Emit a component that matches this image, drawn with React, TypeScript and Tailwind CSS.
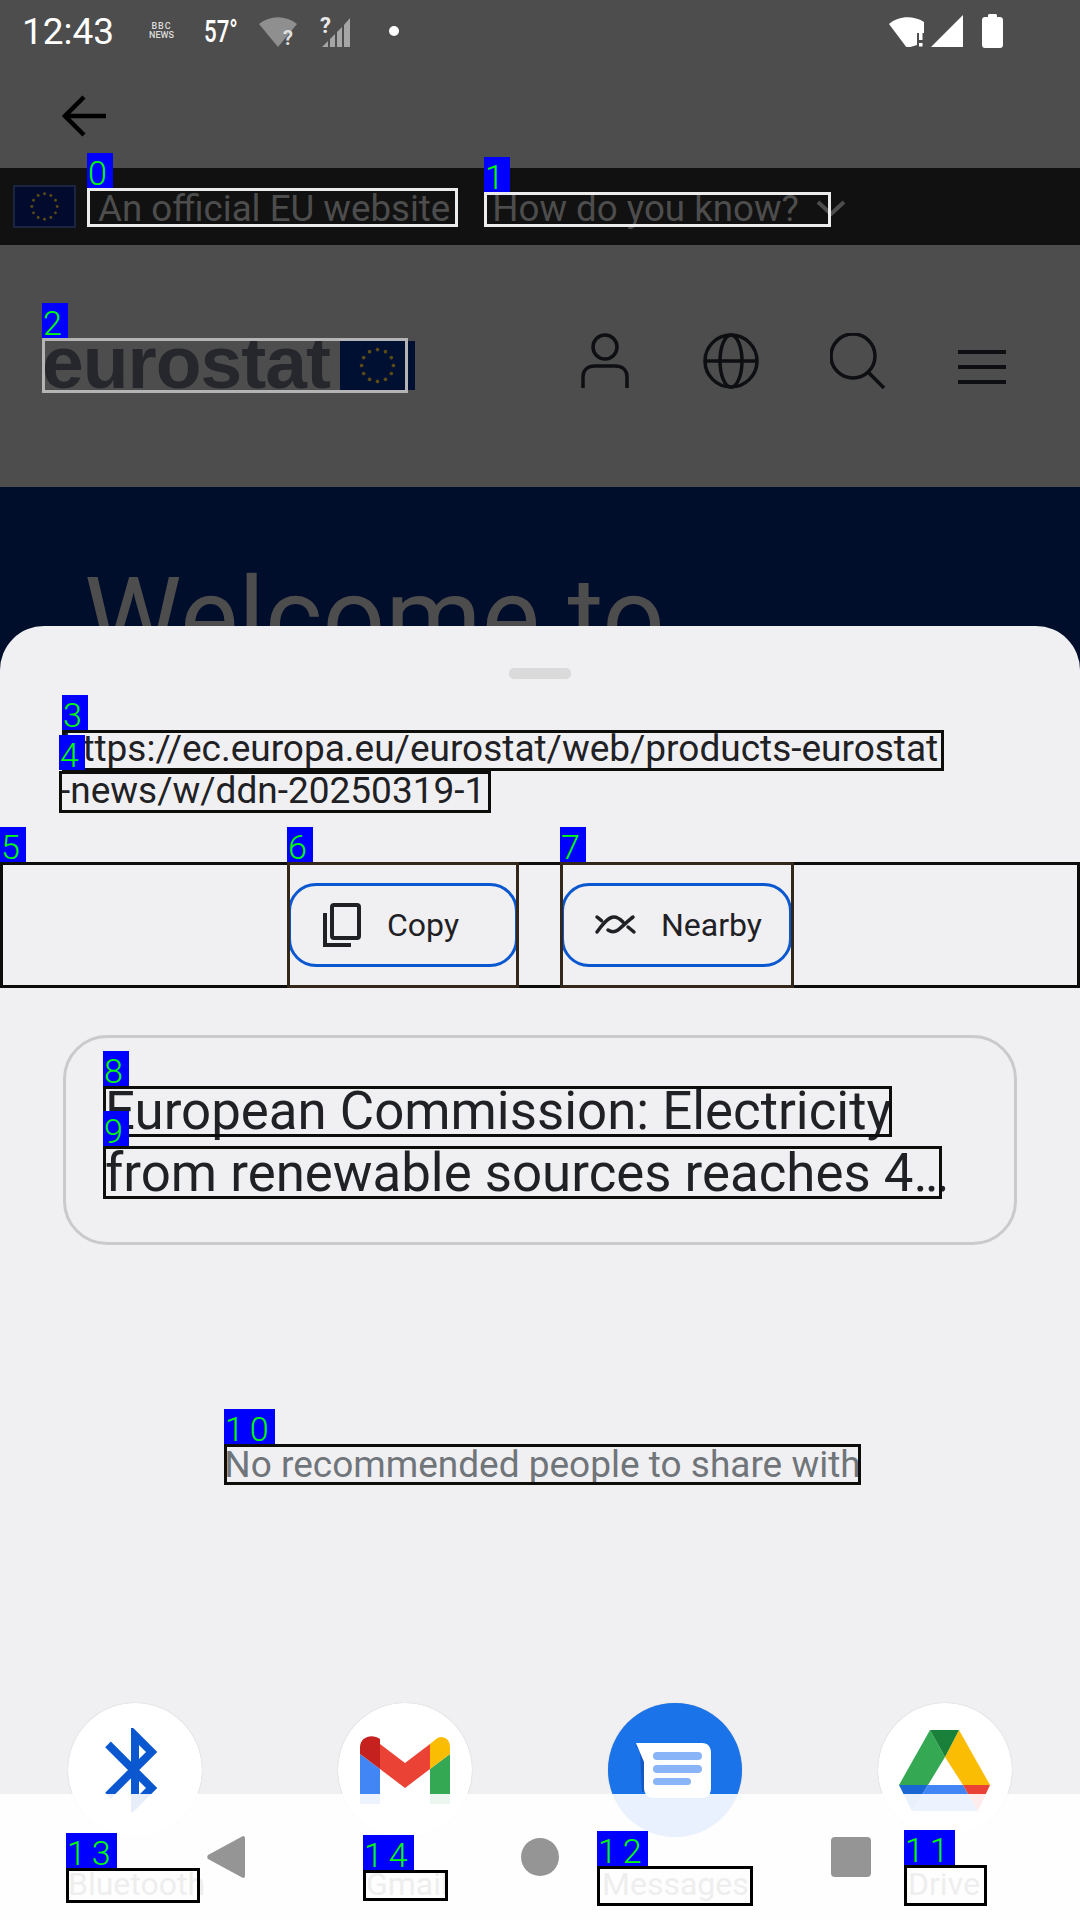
import React from 'react'

const roboto = { fontFamily: 'Roboto, sans-serif' }

const outlines = [
  { box: 'left-[87px] top-[188px] w-[371px] h-[39px] border-[#ececec]' },
  { box: 'left-[484px] top-[192px] w-[347px] h-[35px] border-[#ececec]' },
  { box: 'left-[42px] top-[338px] w-[366px] h-[55px] border-[#b4b4b4]' },
  { box: 'left-[62px] top-[730px] w-[882px] h-[41px] border-[#0d0d0b]' },
  { box: 'left-[59px] top-[771px] w-[432px] h-[42px] border-[#0d0d0b]' },
  { box: 'left-0 top-[862px] w-[1080px] h-[126px] border-[#0d0d0b]' },
  { box: 'left-[287px] top-[862px] w-[232px] h-[126px] border-[#33261a]' },
  { box: 'left-[560px] top-[862px] w-[234px] h-[126px] border-[#33261a]' },
  { box: 'left-[103px] top-[1086px] w-[789px] h-[51px] border-[#0d0d0b]' },
  { box: 'left-[103px] top-[1146px] w-[839px] h-[53px] border-[#0d0d0b]' },
  { box: 'left-[224px] top-[1444px] w-[637px] h-[41px] border-[#0d0d0b]' },
  { box: 'left-[904px] top-[1865px] w-[83px] h-[41px] border-black' },
  { box: 'left-[597px] top-[1866px] w-[156px] h-[40px] border-black' },
  { box: 'left-[66px] top-[1868px] w-[134px] h-[35px] border-black' },
  { box: 'left-[363px] top-[1870px] w-[85px] h-[31px] border-black' },
]

const tags = [
  { n: '0', pos: 'left-[87px] top-[153px] w-[26px]' },
  { n: '1', pos: 'left-[484px] top-[157px] w-[26px]' },
  { n: '2', pos: 'left-[42px] top-[303px] w-[26px]' },
  { n: '3', pos: 'left-[62px] top-[695px] w-[26px]' },
  { n: '4', pos: 'left-[59px] top-[735px] w-[26px]' },
  { n: '5', pos: 'left-0 top-[827px] w-[26px]' },
  { n: '6', pos: 'left-[287px] top-[827px] w-[26px]' },
  { n: '7', pos: 'left-[560px] top-[827px] w-[26px]' },
  { n: '8', pos: 'left-[103px] top-[1051px] w-[26px]' },
  { n: '9', pos: 'left-[103px] top-[1111px] w-[26px]' },
  { n: '10', pos: 'left-[224px] top-[1409px] w-[51px]' },
  { n: '11', pos: 'left-[904px] top-[1830px] w-[51px]' },
  { n: '12', pos: 'left-[597px] top-[1831px] w-[51px]' },
  { n: '13', pos: 'left-[66px] top-[1833px] w-[51px]' },
  { n: '14', pos: 'left-[363px] top-[1835px] w-[51px]' },
]

function EuFlag({ className }: { className: string }) {
  const stars = Array.from({ length: 12 }, (_, i) => {
    const a = (i * Math.PI) / 6
    return { x: 30 + 13 * Math.sin(a), y: 20 - 13 * Math.cos(a), key: i }
  })
  return (
    <svg viewBox="0 0 60 40" className={className}>
      {stars.map((s) => (
        <circle key={s.key} cx={s.x} cy={s.y} r="1.5" fill="#5a4a14" />
      ))}
    </svg>
  )
}

function StatusBar() {
  return (
    <div className="h-[62px] flex items-center text-white" style={roboto}>
      <span className="ml-[22px] w-[126px] text-[37px] leading-none">12:43</span>
      <div className="w-[27px] mr-[29px] flex flex-col items-center text-[9px] leading-[9px] font-medium text-[#dddddd]">
        <span className="tracking-[1px]">BBC</span>
        <span>NEWS</span>
      </div>
      <span className="w-[54px] text-[31px] leading-none font-medium scale-x-[0.72] origin-left">57°</span>
      <svg viewBox="0 0 40 32" className="w-[40px] h-[32px]">
        <path d="M1 9C12 0 28 0 39 9L20 32Z" fill="#8f8f8f" />
        <text x="25" y="30" fontSize="20" fontWeight="700" fill="#e0e0e0" fontFamily="Roboto">?</text>
      </svg>
      <svg viewBox="0 0 32 32" className="ml-[22px] w-[32px] h-[32px]">
        <path d="M2 32L8 26V32ZM10 24L15 19V32H10ZM17 17L22 12V32H17ZM24 10L30 3V32H24Z" fill="#a6a6a6" />
        <text x="0" y="18" fontSize="22" fontWeight="700" fill="#e8e8e8" fontFamily="Roboto">?</text>
      </svg>
      <span className="ml-[37px] w-[10px] h-[10px] rounded-full bg-white" />
      <svg viewBox="0 0 40 32" className="ml-[489px] w-[40px] h-[32px]">
        <path d="M1 9C10 1 25 0 36 7V18H29V30L19 33Z" fill="#ffffff" />
        <rect x="31" y="15" width="3.5" height="10" fill="#ffffff" />
        <rect x="31" y="28" width="3.5" height="3.5" fill="#ffffff" />
      </svg>
      <svg viewBox="0 0 32 32" className="ml-[3px] w-[32px] h-[32px]">
        <path d="M0 32L32 0V32Z" fill="#ffffff" />
      </svg>
      <svg viewBox="0 0 21 34" className="ml-[19px] w-[21px] h-[34px]">
        <path d="M6 3V1.500C6 .7 6.700 0 7.500 0H13.500C14.300 0 15 .7 15 1.500V3H18C19.700 3 21 4.300 21 6V31C21 32.700 19.700 34 18 34H3C1.300 34 0 32.700 0 31V6C0 4.300 1.300 3 3 3Z" fill="#ffffff" />
      </svg>
    </div>
  )
}

function SiteBehind() {
  return (
    <div className="flex flex-col" style={roboto}>
      <div className="h-[106px] pt-[33px] pl-[62px]">
        <svg viewBox="0 0 44 42" className="w-[44px] h-[42px]" fill="none" stroke="#000000" strokeWidth="4.500">
          <path d="M44 21H3M22 2L3 21L22 40" />
        </svg>
      </div>
      <div className="h-[77px] bg-[#111111] flex items-center text-[#4d4d4d] text-[36.7px] leading-none whitespace-nowrap">
        <EuFlag className="ml-[13px] w-[63px] h-[43px] bg-[#020b2e] border-2 border-[#1b2440]" />
        <span className="ml-[22px] mt-[5px]">An official EU website</span>
        <span className="ml-[42px] mt-[5px]">How do you know?</span>
        <svg viewBox="0 0 30 16" className="ml-[17px] mt-[2px] w-[30px] h-[16px]" fill="none" stroke="#4d4d4d" strokeWidth="4">
          <path d="M2 2L15 14L28 2" />
        </svg>
      </div>
      <div className="h-[242px] flex items-start text-[#0e0f12]">
        <span className="ml-[42px] mt-[86px] w-[298px] text-[75px] leading-[62px] font-bold tracking-[-1px] text-[#25272c]" style={{ fontFamily: '"Liberation Sans", sans-serif' }}>
          eurostat
        </span>
        <EuFlag className="mt-[96px] w-[75px] h-[49px] bg-[#001033]" />
        <svg viewBox="0 0 48 56" className="ml-[166px] mt-[88px] w-[48px] h-[56px]" fill="none" stroke="currentColor" strokeWidth="3.500">
          <circle cx="24" cy="14" r="12" />
          <path d="M2 55V44C2 37 7 33 14 33H34C41 33 46 37 46 44V55" />
        </svg>
        <svg viewBox="0 0 56 56" className="ml-[74px] mt-[88px] w-[56px] h-[56px]" fill="none" stroke="currentColor" strokeWidth="3.500">
          <circle cx="28" cy="28" r="26" />
          <ellipse cx="28" cy="28" rx="11" ry="26" />
          <path d="M2 28H54" />
        </svg>
        <svg viewBox="0 0 56 56" className="ml-[71px] mt-[88px] w-[56px] h-[56px]" fill="none" stroke="currentColor" strokeWidth="3.500">
          <circle cx="23" cy="23" r="22" />
          <path d="M38 39L54 55" />
        </svg>
        <div className="ml-[72px] mt-[105px] w-[48px] h-[34px] flex flex-col justify-between">
          <span className="h-[4px] bg-[#0e0f12]" />
          <span className="h-[4px] bg-[#0e0f12]" />
          <span className="h-[4px] bg-[#0e0f12]" />
        </div>
      </div>
      <div className="h-[200px] bg-[#000d2b] pl-[84px] pt-[65px] overflow-hidden">
        <h1 className="text-[110px] leading-[132px] text-[#4d4d4d] whitespace-nowrap">Welcome to</h1>
      </div>
    </div>
  )
}

function Chip({ label, children }: { label: string; children: React.ReactNode }) {
  return (
    <div className="h-[84px] border-[3px] border-[#0b57d0] rounded-[28px] flex items-center text-[32px] leading-none text-[#1f2124]">
      {children}
      <span>{label}</span>
    </div>
  )
}

function BluetoothIcon() {
  return (
    <svg viewBox="0 0 54 84" className="mr-[6px] w-[54px] h-[84px]" fill="none" stroke="#0b57d0" strokeWidth="8">
      <path d="M3 16.400L46.600 60L30 76.600V7.400L46.600 24L3 67.600" />
    </svg>
  )
}

function GmailIcon() {
  return (
    <svg viewBox="0 0 90 68" className="w-[90px] h-[68px]">
      <path d="M0 18V68H20V33Z" fill="#4285f4" />
      <path d="M70 33V68H90V18Z" fill="#34a853" />
      <path d="M20 8L45 27L70 8V33L45 52L20 33Z" fill="#ea4335" />
      <path d="M0 11C0 1 12 -3 20 3V33L0 18Z" fill="#c5221f" />
      <path d="M70 8L75 4C80 -2 90 1 90 11V18L70 33Z" fill="#fbbc04" />
    </svg>
  )
}

function MessagesIcon() {
  return (
    <svg viewBox="0 0 78 56" className="mr-[4px] w-[78px] h-[56px]">
      <path d="M0 2L6 10L8 50H20V20Z" fill="#1558c4" />
      <path d="M2 1H68C74 1 77 5 77 11V46C77 52 74 56 68 56H20C14 56 10 52 10 46V20Z" fill="#ffffff" />
      <rect x="19" y="10" width="49" height="8" rx="4" fill="#8ab4f8" />
      <rect x="19" y="23" width="49" height="8" rx="4" fill="#8ab4f8" />
      <rect x="19" y="36" width="38" height="7" rx="3.500" fill="#8ab4f8" />
    </svg>
  )
}

function DriveIcon() {
  return (
    <svg viewBox="0 0 92 81" className="w-[92px] h-[81px]">
      <path d="M31 0L46 27L29 55H0Z" fill="#34a853" />
      <path d="M60 0L91 55H64L46 27Z" fill="#fbbc04" />
      <path d="M31 0H60L46 27Z" fill="#188038" />
      <path d="M0 55H29L13 81Z" fill="#1967d2" />
      <path d="M29 55H64L79 81H13Z" fill="#4285f4" />
      <path d="M64 55H91L79 81Z" fill="#ea4335" />
    </svg>
  )
}

function ShareTarget({ tone, children }: { tone: string; children: React.ReactNode }) {
  return (
    <div className={`w-[134px] h-[134px] rounded-full flex items-center justify-center shadow-[0_0_1px_rgba(0,0,0,0.25)] ${tone}`}>
      {children}
    </div>
  )
}

function ShareSheet() {
  return (
    <div className="absolute left-0 right-0 top-[626px] bottom-0 bg-[#f0f0f3] rounded-t-[44px] flex flex-col" style={roboto}>
      <div className="mt-[42px] self-center w-[62px] h-[11px] rounded-[5px] bg-[#dadada]" />
      <div className="mt-[49px] ml-[62px] w-[900px] text-[37px] leading-[42px] text-[#1f2124]">
        <div className="whitespace-nowrap">https://ec.europa.eu/eurostat/web/products-eurostat</div>
        <div className="whitespace-nowrap -ml-[2px]">-news/w/ddn-20250319-1</div>
      </div>
      <div className="mt-[71px] h-[84px] flex justify-center gap-[43px]">
        <div className="w-[230px]">
          <Chip label="Copy">
            <svg viewBox="0 0 38 44" className="ml-[32px] mr-[26px] w-[38px] h-[44px]" fill="none" stroke="#1f2124" strokeWidth="4">
              <rect x="9" y="2" width="27" height="33" rx="2" />
              <path d="M2 10V42H28" />
            </svg>
          </Chip>
        </div>
        <div className="w-[231px]">
          <Chip label="Nearby">
            <svg viewBox="0 0 60 40" className="ml-[21px] mr-[16px] w-[60px] h-[40px]" fill="none" stroke="#1f2124" strokeWidth="3.500" strokeLinecap="round">
              <path d="M12 12L16.500 15.700M12 27C17 20 23 12 29 12C33 12 36 15 38 17M23 25C26 27 30 27 33 25C38 21 44 15 48 12M43 22L49 27" />
            </svg>
          </Chip>
        </div>
      </div>
      <div className="mt-[68px] mx-[63px] h-[210px] border-[3px] border-[#cacacd] rounded-[44px] pl-[39px] pt-[42px] text-[52.8px] leading-[62px] text-[#1f2124] whitespace-nowrap">
        <div>European Commission: Electricity</div>
        <div>from renewable sources reaches 4…</div>
      </div>
      <p className="mt-[199px] pl-[5px] text-center text-[37px] leading-[41px] text-[#70757a] whitespace-nowrap">No recommended people to share with</p>
      <div className="mt-[218px] flex pl-[68px] gap-[136px]">
        <ShareTarget tone="bg-white"><BluetoothIcon /></ShareTarget>
        <ShareTarget tone="bg-white"><GmailIcon /></ShareTarget>
        <ShareTarget tone="bg-[#1a73e8]"><MessagesIcon /></ShareTarget>
        <ShareTarget tone="bg-white"><DriveIcon /></ShareTarget>
      </div>
    </div>
  )
}

function NavBar() {
  return (
    <div className="absolute left-0 right-0 bottom-0 h-[126px] bg-white/90 overflow-hidden" style={roboto}>
      <div className="relative h-full">
        <div className="absolute inset-x-0 top-[71px] text-[32px] leading-[38px] text-[#eeeeee] whitespace-nowrap">
          <span className="absolute left-[68px]">Bluetooth</span>
          <span className="absolute left-[366px]">Gmail</span>
          <span className="absolute left-[602px]">Messages</span>
          <span className="absolute left-[908px]">Drive</span>
          <span className="absolute left-[855px] top-[47px]">Save to Drive</span>
        </div>
        <div className="h-full flex items-start pt-[42px]">
          <svg viewBox="0 0 38 42" className="ml-[207px] w-[38px] h-[42px]">
            <path d="M36 0C37 0 38 1 38 2V40C38 41 37 42 36 42L1 23C0 22 0 20 1 19Z" fill="#959595" />
          </svg>
          <span className="ml-[276px] mt-[2px] w-[38px] h-[38px] rounded-full bg-[#959595]" />
          <span className="ml-[272px] mt-[1px] w-[40px] h-[40px] rounded-[4px] bg-[#959595]" />
        </div>
      </div>
    </div>
  )
}

function Annotations() {
  return (
    <div className="absolute inset-0 pointer-events-none">
      {outlines.map((o) => (
        <div key={o.box} className={`absolute border-[3px] ${o.box}`} />
      ))}
      {tags.map((t) => (
        <div
          key={t.n}
          className={`absolute h-[35px] pl-[1px] bg-[#0000ff] text-[#00ff00] text-[34px] leading-[41px] tracking-[6px] font-light ${t.pos}`}
          style={roboto}
        >
          {t.n}
        </div>
      ))}
    </div>
  )
}

export default function App() {
  return (
    <div className="relative w-[1080px] h-[1920px] overflow-hidden bg-[#4d4d4d]">
      <StatusBar />
      <SiteBehind />
      <ShareSheet />
      <NavBar />
      <Annotations />
    </div>
  )
}
